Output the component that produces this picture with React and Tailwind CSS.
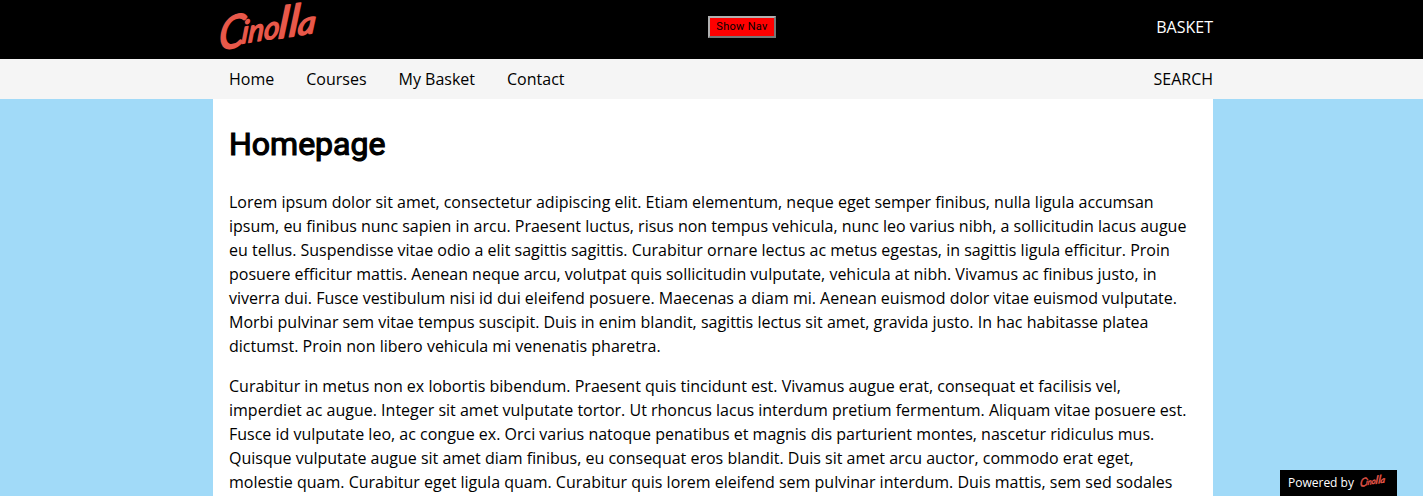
function Logo({ className }) {
  return (
    <svg viewBox="0 0 104 54" className={className} overflow="visible" role="img" aria-label="Cinolla">
      <g
        transform="translate(0 51) rotate(-9) skewX(-14)"
        fill="#e8584a"
        stroke="#e8584a"
        strokeWidth="1.6"
        strokeLinejoin="round"
        fontFamily="Lato, sans-serif"
        fontStyle="italic"
        fontWeight="400"
      >
        <text x="-1" y="-1" fontSize="45" textLength="26" lengthAdjust="spacingAndGlyphs">C</text>
        <text x="22" y="-4" fontSize="31" textLength="38" lengthAdjust="spacingAndGlyphs">ino</text>
        <text x="59" y="-3" fontSize="43" textLength="21" lengthAdjust="spacingAndGlyphs">ll</text>
        <text x="79" y="-3" fontSize="31" textLength="18" lengthAdjust="spacingAndGlyphs">a</text>
      </g>
    </svg>
  );
}

const links = ["Home", "Courses", "My Basket", "Contact"];

export default function App() {
  return (
    <div className="relative flex h-screen flex-col overflow-hidden bg-[#a1daf8] font-['Open_Sans',sans-serif] text-base text-black">
      <header className="h-[59px] shrink-0 bg-black">
        <div className="ml-[213px] flex h-full w-[1000px] items-start justify-between text-white">
          <Logo className="ml-[6px] h-[54px] w-[104px]" />
          <button className="mt-4 ml-[58px] h-[22px] w-[68px] border-2 border-[#767676] border-t-[#b0b0b0] border-l-[#b0b0b0] bg-[#ff0000] font-[Roboto,sans-serif] text-[11px] leading-[18px] tracking-[0.3px] whitespace-nowrap text-black">
            Show Nav
          </button>
          <span className="mt-[15px] w-[110px] text-right">BASKET</span>
        </div>
      </header>
      <nav className="h-10 shrink-0 bg-[#f5f5f5]">
        <div className="ml-[213px] flex h-full w-[1000px] items-center justify-between pl-4">
          <ul className="flex gap-8">
            {links.map((link) => (
              <li key={link}>{link}</li>
            ))}
          </ul>
          <span>SEARCH</span>
        </div>
      </nav>
      <main className="ml-[213px] w-[1000px] grow overflow-hidden bg-white px-4 pt-[21px]">
        <h1 className="mb-[22px] font-[Roboto,sans-serif] text-[32px] leading-[48px] font-normal [-webkit-text-stroke:1.2px_black]">
          Homepage
        </h1>
        <p className="mb-4">
          Lorem ipsum dolor sit amet, consectetur adipiscing elit. Etiam elementum, neque eget semper finibus, nulla ligula accumsan ipsum, eu finibus nunc sapien in arcu. Praesent luctus, risus non tempus vehicula, nunc leo varius nibh, a sollicitudin lacus augue eu tellus. Suspendisse vitae odio a elit sagittis sagittis. Curabitur ornare lectus ac metus egestas, in sagittis ligula efficitur. Proin posuere efficitur mattis. Aenean neque arcu, volutpat quis sollicitudin vulputate, vehicula at nibh. Vivamus ac finibus justo, in viverra dui. Fusce vestibulum nisi id dui eleifend posuere. Maecenas a diam mi. Aenean euismod dolor vitae euismod vulputate. Morbi pulvinar sem vitae tempus suscipit. Duis in enim blandit, sagittis lectus sit amet, gravida justo. In hac habitasse platea dictumst. Proin non libero vehicula mi venenatis pharetra.
        </p>
        <p>
          Curabitur in metus non ex lobortis bibendum. Praesent quis tincidunt est. Vivamus augue erat, consequat et facilisis vel, imperdiet ac augue. Integer sit amet vulputate tortor. Ut rhoncus lacus interdum pretium fermentum. Aliquam vitae posuere est. Fusce id vulputate leo, ac congue ex. Orci varius natoque penatibus et magnis dis parturient montes, nascetur ridiculus mus. Quisque vulputate augue sit amet diam finibus, eu consequat eros blandit. Duis sit amet arcu auctor, commodo erat eget, molestie quam. Curabitur eget ligula quam. Curabitur quis lorem eleifend sem pulvinar interdum. Duis mattis, sem sed sodales
        </p>
      </main>
      <aside className="absolute right-[26px] bottom-0 flex h-[26px] w-[117px] items-center bg-black pl-2 text-xs whitespace-nowrap text-white">
        Powered by
        <Logo className="mb-1 ml-[6px] h-[14px] w-[27px]" />
      </aside>
    </div>
  );
}
